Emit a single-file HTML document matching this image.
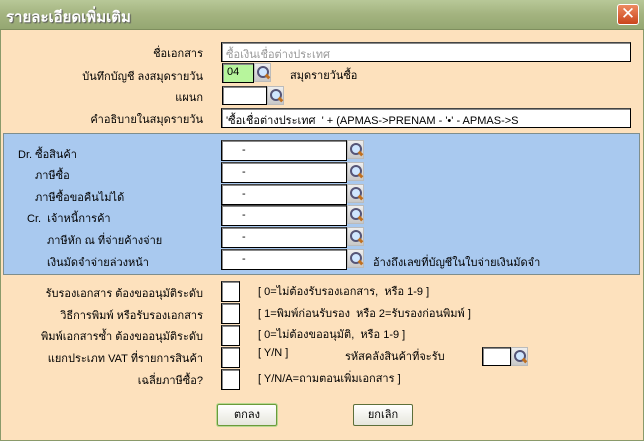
<!DOCTYPE html>
<html><head><meta charset="utf-8"><style>
*{box-sizing:border-box;margin:0;padding:0}
body{width:644px;height:441px;overflow:hidden;background:#fde1bd;font-family:Tahoma,"Liberation Sans","DejaVu Sans",sans-serif;font-size:11px;color:#000;position:relative}
.win{position:absolute;left:0;top:0;width:644px;height:441px;border:1px solid #8a9a6a;border-top:none}
.title{position:absolute;left:0;top:0;width:644px;height:30px;background:linear-gradient(#b8c898,#a3b37f 50%,#95a772);border-bottom:1px solid #7e8e5e}
.title span{position:absolute;left:6px;top:5px;font-size:15px;font-weight:bold;color:#fff;text-shadow:1px 1px 1px #555}
.x{position:absolute;left:617px;top:4px;width:22px;height:21px;background:linear-gradient(#ee8a60,#c9451c);border:1px solid #fff;border-radius:3px;color:#fff;font-weight:bold;font-size:17px;line-height:18px;text-align:center;font-family:"DejaVu Sans",sans-serif}
.a{position:absolute;white-space:nowrap}
.r{position:absolute;white-space:nowrap;text-align:right;width:200px;left:3px}
.box{position:absolute;background:#fff;border:1px solid #000;border-top-color:#444;box-shadow:inset 1px 1px 0 #888}
.ic{position:absolute;width:17px;height:19px;background:linear-gradient(#eee,#c8c8c8);border:1px solid #bbb}
.ic:before{content:"";position:absolute;left:2px;top:2px;width:8px;height:8px;border:2px solid #557;border-radius:50%;background:#cfe6ff}
.ic:after{content:"";position:absolute;left:10px;top:11px;width:5px;height:3px;background:#c07020;transform:rotate(45deg)}
.panel{position:absolute;left:3px;top:133px;width:637px;height:142px;background:#a9c9ef;border:1px solid #7e8e8e}
.dash{padding-left:20px;line-height:18px}
.btn{position:absolute;width:60px;height:22px;background:linear-gradient(#fff,#e6e6dc);border:1px solid #5d6f3a;border-radius:2px;text-align:center;line-height:20px}
.gray{color:#999}
</style></head><body>
<div class="win"></div>
<div class="title"><span>รายละเอียดเพิ่มเติม</span><div class="x">✕</div></div>

<div class="r" style="top:44px">ชื่อเอกสาร</div>
<div class="box" style="left:221px;top:42px;width:410px;height:20px"><span class="gray a" style="left:4px;top:2px">ซื้อเงินเชื่อต่างประเทศ</span></div>
<div class="r" style="top:67px">บันทึกบัญชี ลงสมุดรายวัน</div>
<div class="box" style="left:222px;top:63px;width:32px;height:20px;background:#b7f59c"><span class="a" style="left:4px;top:2px">04</span></div>
<div class="ic" style="left:254px;top:63px"></div>
<div class="a" style="left:290px;top:66px">สมุดรายวันซื้อ</div>
<div class="r" style="top:88px">แผนก</div>
<div class="box" style="left:222px;top:86px;width:45px;height:19px"></div>
<div class="ic" style="left:267px;top:86px"></div>
<div class="r" style="top:110px">คำอธิบายในสมุดรายวัน</div>
<div class="box" style="left:221px;top:108px;width:410px;height:20px"><span class="a" style="left:4px;top:2px">'ซื้อเชื่อต่างประเทศ&nbsp; ' + (APMAS-&gt;PRENAM - '•' - APMAS-&gt;S</span></div>

<div class="panel"></div>
<div class="a" style="left:18px;top:145px">Dr. ซื้อสินค้า</div>
<div class="a" style="left:35px;top:166px">ภาษีซื้อ</div>
<div class="a" style="left:35px;top:188px">ภาษีซื้อขอคืนไม่ได้</div>
<div class="a" style="left:27px;top:209px">Cr.&nbsp; เจ้าหนี้การค้า</div>
<div class="a" style="left:47px;top:231px">ภาษีหัก ณ ที่จ่ายค้างจ่าย</div>
<div class="a" style="left:47px;top:253px">เงินมัดจำจ่ายล่วงหน้า</div>
<div class="box" style="left:221px;top:140px;width:126px;height:21px"><span class="dash">-</span></div><div class="ic" style="left:347px;top:140px"></div>
<div class="box" style="left:221px;top:162px;width:126px;height:21px"><span class="dash">-</span></div><div class="ic" style="left:347px;top:162px"></div>
<div class="box" style="left:221px;top:184px;width:126px;height:21px"><span class="dash">-</span></div><div class="ic" style="left:347px;top:184px"></div>
<div class="box" style="left:221px;top:205px;width:126px;height:21px"><span class="dash">-</span></div><div class="ic" style="left:347px;top:205px"></div>
<div class="box" style="left:221px;top:227px;width:126px;height:21px"><span class="dash">-</span></div><div class="ic" style="left:347px;top:227px"></div>
<div class="box" style="left:221px;top:249px;width:126px;height:21px"><span class="dash">-</span></div><div class="ic" style="left:347px;top:249px"></div>
<div class="a" style="left:373px;top:253px">อ้างถึงเลขที่บัญชีในใบจ่ายเงินมัดจำ</div>

<div class="r" style="top:284px">รับรองเอกสาร ต้องขออนุมัติระดับ</div>
<div class="r" style="top:306px">วิธีการพิมพ์ หรือรับรองเอกสาร</div>
<div class="r" style="top:327px">พิมพ์เอกสารซ้ำ ต้องขออนุมัติระดับ</div>
<div class="r" style="top:349px">แยกประเภท VAT ที่รายการสินค้า</div>
<div class="r" style="top:371px">เฉลี่ยภาษีซื้อ?</div>
<div class="box" style="left:221px;top:281px;width:19px;height:21px"></div>
<div class="box" style="left:221px;top:303px;width:19px;height:21px"></div>
<div class="box" style="left:221px;top:325px;width:19px;height:21px"></div>
<div class="box" style="left:221px;top:347px;width:19px;height:21px"></div>
<div class="box" style="left:221px;top:369px;width:19px;height:21px"></div>
<div class="a" style="left:258px;top:282px">[ 0=ไม่ต้องรับรองเอกสาร,&nbsp; หรือ 1-9 ]</div>
<div class="a" style="left:258px;top:304px">[ 1=พิมพ์ก่อนรับรอง&nbsp; หรือ 2=รับรองก่อนพิมพ์ ]</div>
<div class="a" style="left:258px;top:325px">[ 0=ไม่ต้องขออนุมัติ,&nbsp; หรือ 1-9 ]</div>
<div class="a" style="left:258px;top:347px">[ Y/N ]</div>
<div class="a" style="left:345px;top:347px">รหัสคลังสินค้าที่จะรับ</div>
<div class="box" style="left:482px;top:347px;width:29px;height:19px"></div><div class="ic" style="left:511px;top:347px"></div>
<div class="a" style="left:258px;top:369px">[ Y/N/A=ถามตอนเพิ่มเอกสาร ]</div>

<div class="btn" style="left:217px;top:404px;border-color:#6b9a3a;box-shadow:0 0 0 1px #b8d890">ตกลง</div>
<div class="btn" style="left:353px;top:404px">ยกเลิก</div>
</body></html>
